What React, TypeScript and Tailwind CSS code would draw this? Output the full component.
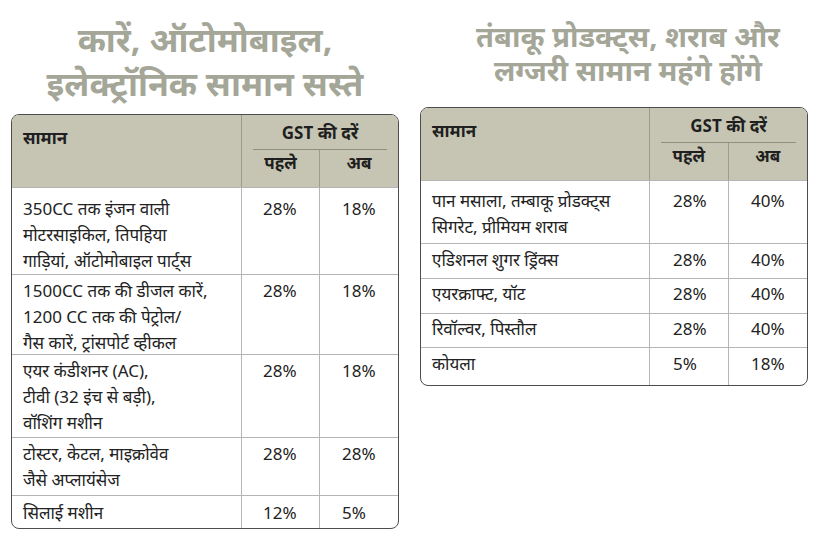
import * as React from "react";

type Row = { item: string[]; before: string; after: string; h: string; pt: string };

const cheaper: Row[] = [
  { item: ["350CC तक इंजन वाली", "मोटरसाइकिल, तिपहिया", "गाड़ियां, ऑटोमोबाइल पार्ट्स"], before: "28%", after: "18%", h: "h-[87px]", pt: "pt-[8px]" },
  { item: ["1500CC तक की डीजल कारें,", "1200 CC तक की पेट्रोल/", "गैस कारें, ट्रांसपोर्ट व्हीकल"], before: "28%", after: "18%", h: "h-[80px]", pt: "pt-[3px]" },
  { item: ["एयर कंडीशनर (AC),", "टीवी (32 इंच से बड़ी),", "वॉशिंग मशीन"], before: "28%", after: "18%", h: "h-[83px]", pt: "pt-[3px]" },
  { item: ["टोस्टर, केटल, माइक्रोवेव", "जैसे अप्लायंसेज"], before: "28%", after: "28%", h: "h-[58px]", pt: "pt-[3px]" },
  { item: ["सिलाई मशीन"], before: "12%", after: "5%", h: "h-[33px]", pt: "pt-[4px]" },
];

const costlier: Row[] = [
  { item: ["पान मसाला, तम्बाकू प्रोडक्ट्स", "सिगरेट, प्रीमियम शराब"], before: "28%", after: "40%", h: "h-[63px]", pt: "pt-[7px]" },
  { item: ["एडिशनल शुगर ड्रिंक्स"], before: "28%", after: "40%", h: "h-[35px]", pt: "pt-[3px]" },
  { item: ["एयरक्राफ्ट, यॉट"], before: "28%", after: "40%", h: "h-[35px]", pt: "pt-[2px]" },
  { item: ["रिवॉल्वर, पिस्तौल"], before: "28%", after: "40%", h: "h-[34px]", pt: "pt-[2px]" },
  { item: ["कोयला"], before: "5%", after: "18%", h: "h-[38px]", pt: "pt-[3px]" },
];

function RateTable({ rows, cols, numPad }: { rows: Row[]; cols: string; numPad: string }) {
  return (
    <div className="overflow-hidden rounded-[8px] border-[1.5px] border-[#4d4d4d] bg-white">
      <div className={`grid ${cols} h-[72px] bg-[#c6c5b3] text-[17px] font-bold text-[#1f1f1f]`}>
        <div className="border-r border-[#9c9b8c] pl-[11px] pt-[10px]">सामान</div>
        <div className="col-span-2 flex flex-col">
          <div className="pt-[6px] text-center leading-[24px]">GST की दरें</div>
          <div className="mx-[11px] mt-[4px] border-t border-[#8f8e80]" />
          <div className="grid flex-1 grid-cols-2 leading-[26px]">
            <div className="border-r border-[#9c9b8c] text-center">पहले</div>
            <div className="text-center">अब</div>
          </div>
        </div>
      </div>
      {rows.map((r, i) => (
        <div key={i} className={`grid ${cols} ${r.h} border-t border-[#b5b5b5] text-[17px] leading-[26px] text-[#222]`}>
          <div className={`${r.pt} border-r border-[#b5b5b5] pl-[11px]`}>
            {r.item.map((l) => (
              <div key={l} className="whitespace-nowrap">{l}</div>
            ))}
          </div>
          <div className={`${r.pt} ${numPad} border-r border-[#b5b5b5]`}>{r.before}</div>
          <div className={`${r.pt} pl-[22px]`}>{r.after}</div>
        </div>
      ))}
    </div>
  );
}

export default function App() {
  return (
    <div className="flex h-[533px] w-[839px] bg-white font-['Noto_Sans','Noto_Sans_Devanagari','Lohit_Devanagari',sans-serif]">
      <div className="ml-[11px] flex w-[388px] flex-col">
        <h1 className="mt-[17px] text-center text-[34px] font-bold leading-[44px] text-[#a4a698]">
          कारें, ऑटोमोबाइल,
          <br />
          इलेक्ट्रॉनिक सामान सस्ते
        </h1>
        <div className="mt-[9px]">
          <RateTable rows={cheaper} cols="grid-cols-[230px_78px_1fr]" numPad="pl-[21px]" />
        </div>
      </div>
      <div className="ml-[21px] flex w-[388px] flex-col">
        <h1 className="mt-[19px] pl-[28px] text-center text-[29px] font-bold leading-[34px] text-[#a4a698]">
          तंबाकू प्रोडक्ट्स, शराब और
          <br />
          लग्जरी सामान महंगे होंगे
        </h1>
        <div className="mt-[20px]">
          <RateTable rows={costlier} cols="grid-cols-[229px_79px_1fr]" numPad="pl-[23px]" />
        </div>
      </div>
    </div>
  );
}
